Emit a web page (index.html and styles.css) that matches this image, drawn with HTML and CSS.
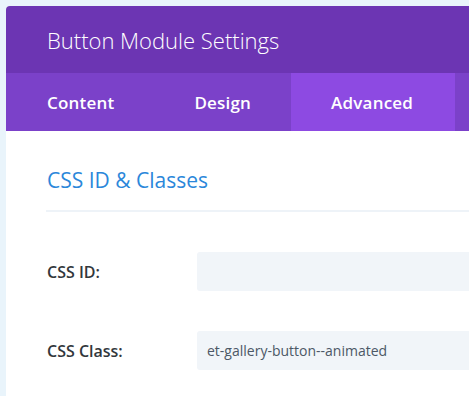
FILE: index.html
```html
<!DOCTYPE html>
<html lang="en">
<head>
    <meta charset="UTF-8">
    <meta name="viewport" content="width=device-width, initial-scale=1.0">
    <title>Button Module Settings</title>
    <link rel="stylesheet" href="styles.css">
</head>
<body>
    <div class="modal">
        <div class="modal-header">
            <h2>Button Module Settings</h2>
        </div>
        <div class="tabs">
            <div class="tab">Content</div>
            <div class="tab">Design</div>
            <div class="tab active">Advanced</div>
        </div>
        <div class="modal-body">
            <h3 class="section-title">CSS ID &amp; Classes</h3>
            <div class="field">
                <label for="cssId">CSS ID:</label>
                <input id="cssId" type="text" value="">
            </div>
            <div class="field">
                <label for="cssClass">CSS Class:</label>
                <input id="cssClass" type="text" value="et-gallery-button--animated">
            </div>
        </div>
    </div>
</body>
</html>
```

FILE: styles.css
```css
body {
    margin: 0;
    font-family: "Open Sans", Arial, sans-serif;
    background-color: #e9f4fb;
    overflow: hidden;
}
.modal {
    margin: 6px 0 0 6px;
    height: 390px;
    background: white;
    border-radius: 4px 0 0 0;
    overflow: hidden;
}
.modal-header {
    height: 67px;
    background-color: #6c35b3;
    display: flex;
    align-items: center;
    padding-left: 41px;
}
.modal-header h2 {
    margin: 0;
    color: white;
    font-size: 22px;
    font-weight: 300;
}
.tabs {
    display: flex;
    height: 58px;
    background-color: #7b41c9;
}
.tab {
    display: flex;
    align-items: center;
    padding: 0 40px;
    color: white;
    font-size: 17px;
    font-weight: 600;
    letter-spacing: 0.2px;
}
.tab:first-child {
    padding-left: 41px;
}
.tab.active {
    padding-right: 42px;
    background-color: #8d4ae2;
}
.modal-body {
    padding: 33px 0 0 40px;
}
.section-title {
    margin: 0;
    padding: 0 0 14px 1px;
    color: #2b87da;
    font-size: 21px;
    font-weight: 400;
    line-height: 32px;
    border-bottom: 2px solid #eef3f8;
}
.field {
    display: flex;
    align-items: center;
    margin-top: 40px;
}
.field label {
    width: 150px;
    padding-left: 1px;
    color: #32373c;
    font-size: 16px;
    font-weight: 600;
}
.field input {
    flex: 1;
    min-width: 0;
    height: 39px;
    box-sizing: border-box;
    padding: 0 10px;
    border: none;
    border-radius: 3px 0 0 3px;
    background-color: #f1f5f9;
    color: #4c5866;
    font-family: "Open Sans", Arial, sans-serif;
    font-size: 14px;
}
```
